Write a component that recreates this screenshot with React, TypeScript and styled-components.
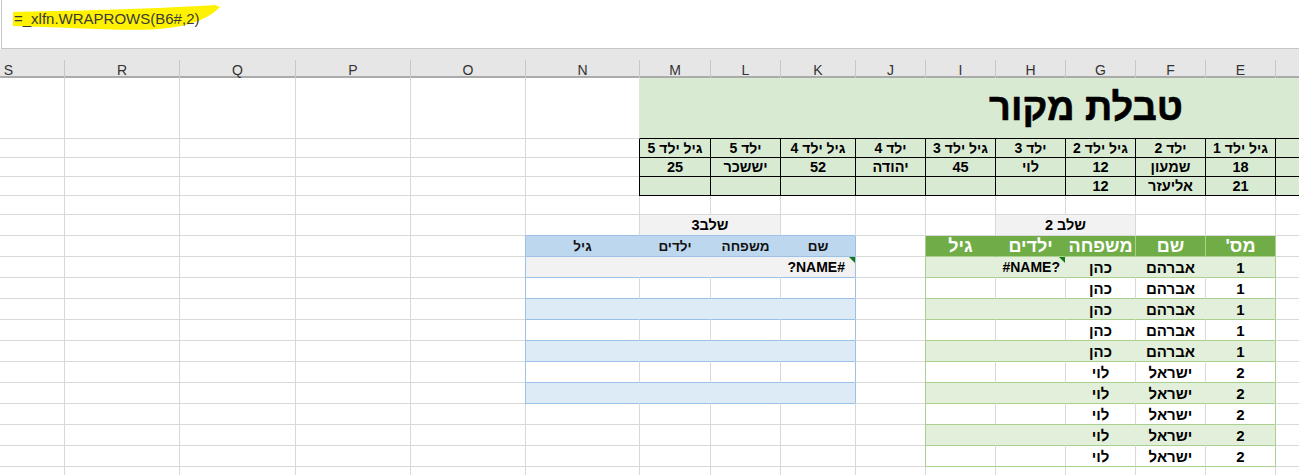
import React from 'react';
import styled, { createGlobalStyle } from 'styled-components';

const GlobalStyle = createGlobalStyle`
  html, body {
    margin: 0;
    padding: 0;
    background: #fff;
    overflow: hidden;
  }
  body {
    font-family: "Liberation Sans", Arial, "DejaVu Sans", sans-serif;
  }
`;

// column widths, left to right (S is cut off on the left, D on the right)
const COLS = [112, 115, 116, 115, 115, 114, 71, 70, 75, 70, 70, 70, 70, 70, 70, 70];
const LETTERS = ['S', 'R', 'Q', 'P', 'O', 'N', 'M', 'L', 'K', 'J', 'I', 'H', 'G', 'F', 'E', ''];
const ROWS = [61, 19, 19, 19, 19, 21, ...Array(12).fill(21)];
const colTemplate = COLS.map((w) => `${w}px`).join(' ');

const GRID = '#d9d9d9';
const BLACK = '#000';
const SRC = '#d9ead3';
const G_HEAD = '#70ad47';
const G_ROW = '#e2efda';
const G_LINE = '#a9d08e';
const B_HEAD = '#bdd7ee';
const B_ROW = '#ddebf7';
const B_LINE = '#9bc2e6';
const GREY = '#f2f2f2';
const WHITE = '#fff';

const Window = styled.div`
  width: 1299px;
  height: 475px;
  overflow: hidden;
  background: #fff;
`;

const FormulaBar = styled.div`
  position: relative;
  height: 48px;
  margin-left: 1px;
  border-left: 1px solid #c6c6c6;
  border-bottom: 1px solid #c6c6c6;
  background: #fff;
`;

const Highlight = styled.svg`
  position: absolute;
  left: 0;
  top: 0;
`;

const Formula = styled.span`
  position: relative;
  display: inline-block;
  margin: 10px 0 0 12px;
  font-size: 15px;
  line-height: 17px;
  color: #3a3a3a;
  white-space: nowrap;
`;

const HeaderBar = styled.div`
  background: #e6e6e6;
  padding-top: 11px;
  border-bottom: 2px solid #ababab;
`;

const HeaderRow = styled.div`
  display: grid;
  grid-template-columns: ${colTemplate};
  height: 16px;
  margin-left: -48px;
`;

const ColLetter = styled.div`
  display: flex;
  align-items: center;
  justify-content: center;
  padding-top: 2px;
  box-sizing: border-box;
  border-left: 1px solid #c8c8c8;
  font-size: 14px;
  color: #333;
`;

const Sheet = styled.div`
  display: grid;
  grid-template-columns: ${colTemplate};
  grid-template-rows: ${ROWS.map((h) => `${h}px`).join(' ')};
  margin-left: -48px;
`;

const Cell = styled.div<{
  $span: number;
  $bg: string;
  $bl: string;
  $bb: string;
  $align: 'center' | 'right';
  $size: number;
  $color: string;
  $pr: number;
}>`
  position: relative;
  grid-column: span ${(p) => p.$span};
  display: flex;
  align-items: center;
  justify-content: ${(p) => (p.$align === 'right' ? 'flex-end' : 'center')};
  box-sizing: border-box;
  padding: 0 ${(p) => p.$pr}px 0 4px;
  background: ${(p) => p.$bg};
  border-left: 1px solid ${(p) => p.$bl};
  border-bottom: 1px solid ${(p) => p.$bb};
  font-size: ${(p) => p.$size}px;
  font-weight: bold;
  color: ${(p) => p.$color};
  white-space: nowrap;
`;

const Title = styled.span`
  font-size: 38px;
  font-weight: bold;
  color: #000;
  padding-bottom: 2px;
  -webkit-text-stroke: 0.6px #000;
`;

const Flag = styled.span`
  position: absolute;
  top: 0;
  right: 0;
  width: 0;
  height: 0;
  border-top: 6px solid #137a13;
  border-left: 6px solid transparent;
`;

type Spec = {
  span?: number;
  bg: string;
  bl: string;
  bb: string;
  text?: string;
  title?: boolean;
  align?: 'center' | 'right';
  size?: number;
  color?: string;
  pr?: number;
  dir?: 'rtl' | 'ltr';
  flag?: boolean;
};

const srcHead: Record<number, string> = {
  6: 'גיל ילד 5', 7: 'ילד 5', 8: 'גיל ילד 4', 9: 'ילד 4', 10: 'גיל ילד 3',
  11: 'ילד 3', 12: 'גיל ילד 2', 13: 'ילד 2', 14: 'גיל ילד 1',
};
const srcRow1: Record<number, string> = {
  6: '25', 7: 'יששכר', 8: '52', 9: 'יהודה', 10: '45', 11: 'לוי', 12: '12', 13: 'שמעון', 14: '18',
};
const srcRow2: Record<number, string> = { 12: '12', 13: 'אליעזר', 14: '21' };

const stage3Head: Record<number, string> = { 5: 'גיל', 6: 'ילדים', 7: 'משפחה', 8: 'שם' };
const stage2Head: Record<number, string> = { 10: 'גיל', 11: 'ילדים', 12: 'משפחה', 13: 'שם', 14: "מס'" };

function baseCell(r: number, c: number): Spec {
  const s: Spec = { bg: WHITE, bl: GRID, bb: GRID };

  // source table
  if (r >= 1 && r <= 3 && c >= 6) {
    s.bg = SRC;
    s.bl = BLACK;
    s.bb = BLACK;
    s.size = r === 1 ? 14 : 14.5;
    const map = r === 1 ? srcHead : r === 2 ? srcRow1 : srcRow2;
    s.text = map[c];
  }

  // line above stage 3 table
  if (r === 5 && c >= 5 && c <= 8) s.bb = B_LINE;

  // stage 3 (blue)
  if (r >= 6 && r <= 13 && c >= 5 && c <= 8) {
    s.bg = r === 6 ? B_HEAD : r === 7 ? GREY : r % 2 === 1 ? B_ROW : WHITE;
    s.bl = c === 5 ? B_LINE : s.bg === WHITE ? GRID : s.bg;
    s.bb = B_LINE;
    if (r === 6) {
      s.text = stage3Head[c];
      s.size = 13.5;
      s.color = '#111';
    }
    if (r === 7 && c === 8) {
      s.text = '#NAME?';
      s.dir = 'rtl';
      s.align = 'right';
      s.pr = 10;
      s.flag = true;
    }
  }
  if (r >= 6 && r <= 13 && c === 9) s.bl = B_LINE;

  // stage 2 (green)
  if (r >= 6 && r <= 16 && c >= 10 && c <= 14) {
    s.bg = r === 6 ? G_HEAD : (r - 7) % 2 === 0 ? G_ROW : WHITE;
    if (c === 10) s.bl = G_LINE;
    else if (r === 6) s.bl = c >= 13 ? G_LINE : s.bg;
    else s.bl = s.bg === WHITE ? GRID : s.bg;
    s.bb = G_LINE;
    if (r === 6) {
      s.text = stage2Head[c];
      s.size = 18;
      s.color = '#fff';
    } else {
      const first = r <= 11;
      if (c === 14) s.text = first ? '1' : '2';
      if (c === 13) s.text = first ? 'אברהם' : 'ישראל';
      if (c === 12) s.text = first ? 'כהן' : 'לוי';
      s.size = 15;
      if (r === 7 && c === 11) {
        s.text = '#NAME?';
        s.dir = 'ltr';
        s.align = 'right';
        s.pr = 5;
        s.size = 14;
        s.flag = true;
      }
    }
  }
  if (r >= 6 && r <= 16 && c === 15) s.bl = G_LINE;

  return s;
}

function buildRow(r: number): Spec[] {
  const out: Spec[] = [];
  for (let c = 0; c < COLS.length; c++) {
    if (r === 0 && c === 6) {
      out.push({ span: 10, bg: SRC, bl: SRC, bb: BLACK, title: true, text: 'טבלת מקור', align: 'right', pr: 162 });
      break;
    }
    if (r === 5 && (c === 6 || c === 11)) {
      out.push({
        span: 2,
        bg: GREY,
        bl: GRID,
        bb: c === 6 ? B_LINE : GRID,
        text: c === 6 ? 'שלב3' : 'שלב 2',
        size: 14.5,
      });
      c++;
      continue;
    }
    out.push(baseCell(r, c));
  }
  return out;
}

const rows = ROWS.map((_, r) => buildRow(r));

export default function App() {
  return (
    <Window>
      <GlobalStyle />
      <FormulaBar>
        <Highlight width="240" height="40" viewBox="0 0 240 40">
          <path
            d="M11 12 C60 11 150 9 213 5 L218 7 C207 18 190 27 150 29.5 C110 31 60 27 11 26 Z"
            fill="#fff200"
          />
        </Highlight>
        <Formula>=_xlfn.WRAPROWS(B6#,2)</Formula>
      </FormulaBar>
      <HeaderBar>
        <HeaderRow>
          {LETTERS.map((l, i) => (
            <ColLetter key={i}>{l}</ColLetter>
          ))}
        </HeaderRow>
      </HeaderBar>
      <Sheet>
        {rows.map((row, r) =>
          row.map((s, i) => (
            <Cell
              key={`${r}-${i}`}
              $span={s.span ?? 1}
              $bg={s.bg}
              $bl={s.bl}
              $bb={s.bb}
              $align={s.align ?? 'center'}
              $size={s.size ?? 14}
              $color={s.color ?? '#000'}
              $pr={s.pr ?? 4}
            >
              {s.title ? (
                <Title dir="rtl">{s.text}</Title>
              ) : (
                s.text && <span dir={s.dir ?? 'rtl'}>{s.text}</span>
              )}
              {s.flag && <Flag />}
            </Cell>
          ))
        )}
      </Sheet>
    </Window>
  );
}
